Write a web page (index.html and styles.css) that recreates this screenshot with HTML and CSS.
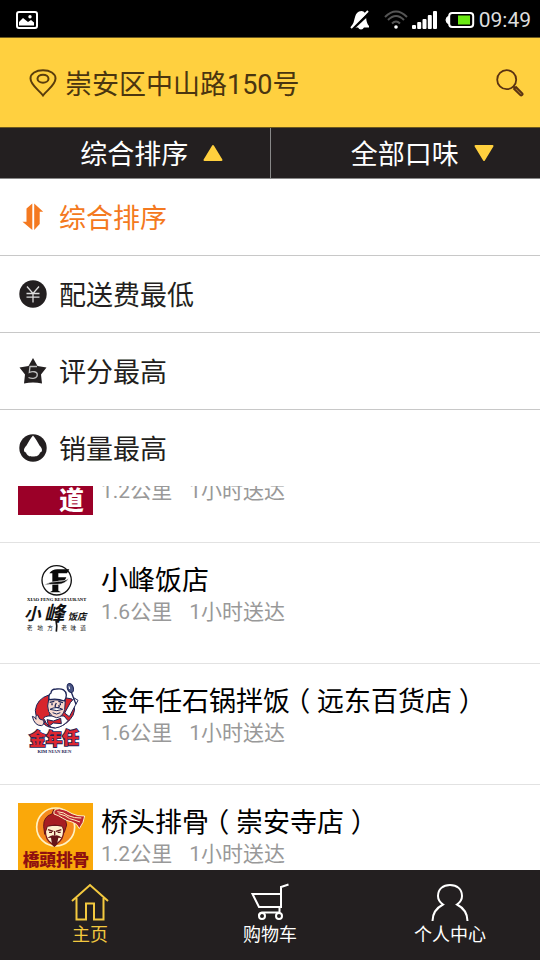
FILE: index.html
```html
<!DOCTYPE html>
<html lang="zh-CN">
<head>
<meta charset="utf-8">
<meta name="viewport" content="width=device-width, initial-scale=1">
<title>综合排序</title>
<link rel="stylesheet" href="styles.css">
</head>
<body>
<div class="app">
  <div class="status">
    <svg class="status-picture" width="22" height="18" viewBox="0 0 22 18" aria-hidden="true">
      <rect x="1" y="1" width="20" height="16" rx="2" fill="none" stroke="#fff" stroke-width="2"/>
      <path d="M3 14.500V11l4-4 5 4 3-2 3 2.500v3z" fill="#fff"/><circle cx="14" cy="5.700" r="1.700" fill="#fff"/>
    </svg>
    <div class="status-right">
      <svg width="20" height="20" viewBox="0 0 20 20" aria-hidden="true">
        <path d="M9 1.500q4-1.500 6 1.500c2 3 0 8 4 13v1.500h-5q-1 2-3 2t-3-2H1.500V16c4-4 2-12 7.500-14.500z" fill="#fff"/>
        <path d="M1.500 19.500L20 2.500" stroke="#000" stroke-width="3"/><path d="M1 18L18 1" stroke="#fff" stroke-width="2"/>
      </svg>
      <svg class="status-wifi" width="24" height="20" viewBox="0 0 24 20" fill="none" stroke="#555" stroke-width="2" aria-hidden="true">
        <path d="M1 7q11-11 22 0M4 10q8-8 16 0M8 13.500q4-4 8 0"/><circle cx="12" cy="17" r="1.800" fill="#fff" stroke="none"/>
      </svg>
      <svg width="25" height="18" viewBox="0 0 25 18" fill="#fff" aria-hidden="true">
        <rect x="0" y="14" width="4" height="4" rx="1"/><rect x="5.200" y="11" width="4" height="7" rx="1"/><rect x="10.500" y="8" width="4" height="10" rx="1"/><rect x="15.800" y="4" width="4" height="14" rx="1"/><rect x="21" y="0" width="4" height="18" rx="1"/>
      </svg>
      <svg class="status-battery" width="30" height="18" viewBox="0 0 30 18" aria-hidden="true">
        <path d="M4 5Q1 6 1 9t3 4z" fill="#fff" stroke="#fff"/><rect x="4.200" y="2" width="24" height="14" rx="3" fill="none" stroke="#fff" stroke-width="2"/><rect x="13" y="4.500" width="12" height="9" fill="#6bea14"/>
      </svg>
      <span class="status-time">09:49</span>
    </div>
  </div>

  <header class="header">
    <svg width="28" height="28" viewBox="0 0 28 28" fill="none" stroke="#5a3d0c" stroke-width="2" aria-hidden="true">
      <path d="M14 26.500C10 21 1.500 16 1.500 9.500 1.500 4.500 7 1.300 14 1.300s12.500 3.200 12.500 8.200C26.500 16 18 21 14 26.500z"/><ellipse cx="14" cy="9.700" rx="5.500" ry="4"/>
    </svg>
    <h1 class="address label">崇安区中山路150号</h1>
    <button class="search" type="button" aria-label="搜索">
      <svg width="28" height="28" viewBox="0 0 28 28" fill="none" stroke="#5a3212" stroke-width="1.800" aria-hidden="true">
        <circle cx="10.700" cy="10.700" r="9.500"/><path d="M17.500 17.500l2 2"/><path d="M20 18l6.300 6.300q.8 1-.2 1.800t-1.800 0L18 20z" fill="#a5792a"/>
      </svg>
    </button>
  </header>

  <div class="tabs">
    <button class="tab" type="button"><span class="label">综合排序</span><svg width="20" height="18" viewBox="0 0 20 18" aria-hidden="true"><path d="M10 2l8.500 14H1.500z" fill="#ffd03e" stroke="#ffd03e" stroke-width="2" stroke-linejoin="round"/></svg></button>
    <button class="tab" type="button"><span class="label">全部口味</span><svg width="20" height="18" viewBox="0 0 20 18" aria-hidden="true"><path d="M10 16L1.500 2h17z" fill="#ffd03e" stroke="#ffd03e" stroke-width="2" stroke-linejoin="round"/></svg></button>
  </div>

  <div class="sort">
    <button class="option option-active" type="button">
      <svg width="28" height="28" viewBox="0 0 28 28" fill="#f47920" aria-hidden="true">
        <path d="M13.300.500v26.500L3.500 18.700H7.500V5.500zM15.200.500L24.200 8.700H20.700V21l-5.500 6z"/>
      </svg><span class="label">综合排序</span></button>
    <button class="option" type="button">
      <svg width="28" height="28" viewBox="0 0 28 28" aria-hidden="true">
        <circle cx="14" cy="14" r="13.700" fill="#231f20"/><path d="M8 6.500l6 7 6-7M14 13.500v9M7.500 13.500h13M7.500 17.200h13" fill="none" stroke="#ddd" stroke-width="1.300"/>
      </svg><span class="label">配送费最低</span></button>
    <button class="option" type="button">
      <svg width="28" height="28" viewBox="0 0 28 28" aria-hidden="true">
        <path d="M14 1l4.500 8L27.500 10.500l-5.500 7 1 9q-9-2-18 0l1-9-5.500-7L9.500 9z" fill="#231f20"/><path d="M18 9.500h-7l-.7 6c3-1.500 8-1.200 8 2.200 0 3.800-5 4.300-8.800 2.800" fill="none" stroke="#bbb" stroke-width="1.300"/>
      </svg><span class="label">评分最高</span></button>
    <button class="option" type="button">
      <svg width="28" height="28" viewBox="0 0 28 28" aria-hidden="true">
        <circle cx="14" cy="14" r="13.700" fill="#231f20"/><path d="M14 1.500c3 3 4.500 7 6.500 10 3.500 3.500 3 6.500.5 7-1 3.500-3.500 4-7 4s-6-.5-7-4c-2.500-.5-3-3.500.5-7 2-3 3.500-7 6.500-10z" fill="#fff"/>
      </svg><span class="label">销量最高</span></button>
  </div>

  <main class="results">
    <ul class="shops">
      <li class="shop shop-scrolled">
        <svg class="logo" viewBox="0 0 225 225" aria-hidden="true"><rect width="225" height="225" fill="#9b0028"/><text class="han heavy" x="124" y="208" font-size="74" fill="#fff">道</text></svg>
        <div class="info"><h2 class="name"></h2><p class="meta"><span>1.2公里</span><span>1小时送达</span></p></div>
      </li>
      <li class="shop">
        <svg class="logo" viewBox="24 18 225 225" aria-hidden="true">
          <circle cx="140" cy="76" r="44" fill="none" stroke="#111" stroke-width="4"/>
          <path d="M118 55q10-14 28-12h32l-7 12h-26v12h24l-5 10h-19v30l8 5h-34l8-5V55z" fill="#080808"/>
          <path d="M103 91q18-13 42-12 18 1 32-10-11 19-34 19-23-1-40 3z" fill="#080808" stroke="#fff" stroke-width="2"/>
          <text class="serif" x="140" y="138" text-anchor="middle" font-size="14">XIAO FENG RESTAURANT</text>
          <g fill="#111"><text class="han brush" x="42" y="196" font-size="50">小</text><text class="han brush" x="102" y="199" font-size="62">峰</text><text class="han brush" x="173" y="194" font-size="28">饭店</text></g>
          <path d="M138 196q4 16 1 34" fill="none" stroke="#111" stroke-width="5"/>
          <g class="han" fill="#111" font-size="17" text-anchor="middle"><text x="59" y="224">老</text><text x="90" y="224">地</text><text x="120" y="224">方</text><text x="162" y="224">老</text><text x="190" y="224">味</text><text x="219" y="224">道</text></g>
        </svg>
        <div class="info"><h2 class="name">小峰饭店</h2><p class="meta"><span>1.6公里</span><span>1小时送达</span></p></div>
      </li>
      <li class="shop">
        <svg class="logo" viewBox="24 21 225 225" aria-hidden="true">
          <path d="M116 60q-36 12-40 46 1 30 24 38l20-10zM164 68l22 4q18 36-6 62-18 20-46 25-26-2-34-15l14-12z" fill="#d8252c" stroke="#1c2456" stroke-width="3"/>
          <path d="M104 135q-10-8 10-12h48l12 14q-14 18-38 22-24-2-32-24z" fill="#fff" stroke="#1c2456" stroke-width="3"/>
          <path d="M116 74q-6 20 0 36 10 18 24 18 18-2 24-24l2-28z" fill="#f7d9cf" stroke="#1c2456" stroke-width="3"/>
          <path d="M117 74q-2-16 6-20 0-12 16-12 28-4 30 18 0 10-6 18-22-9-46-4z" fill="#fff" stroke="#1c2456" stroke-width="4"/>
          <path d="M119 82l14-3M145 79l14 4M126 85v6M151 85v6M139 84q-8 14 2 14t5-8" fill="none" stroke="#1c2456" stroke-width="4"/>
          <path d="M120 103q18-10 38 0-16 8-38 0zM128 113q12 8 23 0" fill="#fff" stroke="#1c2456" stroke-width="3"/>
          <path d="M164 114l17-31 12-14 11 7-8 15-18 34z" fill="#fff" stroke="#1c2456" stroke-width="3"/>
          <path d="M184 52l14 36" stroke="#1c2456" stroke-width="4"/><ellipse cx="181" cy="39" rx="9" ry="14" fill="#4b5685" stroke="#1c2456" stroke-width="3" transform="rotate(-20 181 39)"/><path d="M177 34l2 8" stroke="#fff" stroke-width="3"/>
          <path d="M67 124q9 2 11 9-2-14 5-13l6 12 12 4q3 14-7 16-21 0-27-28z" fill="#f7d9cf" stroke="#1c2456" stroke-width="3"/>
          <path d="M111 134l19 4 22-8 2 16-24-2-14 10z" fill="#d8252c" stroke="#1c2456" stroke-width="3"/>
          <g class="han heavy" fill="#dc2730" stroke="#1c2456" stroke-width="5" paint-order="stroke" font-size="50"><text x="58" y="211">金</text><text x="107" y="209">年</text><text x="157" y="208">任</text></g>
          <text class="serif" x="133" y="235" text-anchor="middle" font-size="14" fill="#1c2456">KIM NIAN REN</text>
        </svg>
        <div class="info"><h2 class="name">金年任石锅拌饭<span class="paren">（</span>远东百货店<span class="paren">）</span></h2><p class="meta"><span>1.6公里</span><span>1小时送达</span></p></div>
      </li>
      <li class="shop">
        <svg class="logo" viewBox="24 37 225 225" aria-hidden="true">
          <rect x="24" y="37" width="225" height="225" fill="#faa80a"/>
          <circle cx="137" cy="109" r="57" fill="#f58a1d" stroke="#fff3c2" stroke-width="5"/>
          <path d="M106 104q-2 36 10 47l17 15 17-15q13-12 12-47z" fill="#fff1cf" stroke="#7b1818" stroke-width="4"/>
          <path d="M101 107q-1-30 25-37l5-13 8 12q29 8 31 34l-7 22-6-18q-22-8-45 0l-8 24z" fill="#a71d22" stroke="#65151a" stroke-width="3"/>
          <path d="M132 70q-3-15 16-16 22 3 38 15 16 8 38 7-2 19-16 38-6-16-22-20-16-3-29-12-12-8-25-12z" fill="#bd2630" stroke="#fff3c2" stroke-width="3"/>
          <path d="M142 63q20 1 32 12 19 8 40 7M146 69q22 5 33 15 16 4 31 10" fill="none" stroke="#fff3c2" stroke-width="3"/>
          <path d="M114 117l16 5M154 117l-16 5M117 125h9M143 125h9M134 121v14" stroke="#65151a" stroke-width="4"/>
          <path d="M112 142q16-13 22-6 7-7 23 6l-12-1-4 20-7 7-8-7-3-20z" fill="#65151a"/>
          <text class="han heavy" x="38" y="227" font-size="50" fill="#8f1010">橋頭排骨</text>
          <path d="M76 240h54M144 240h57" stroke="#7b1010" stroke-width="3" stroke-dasharray="9 3"/>
        </svg>
        <div class="info"><h2 class="name">桥头排骨<span class="paren">（</span>崇安寺店<span class="paren">）</span></h2><p class="meta"><span>1.2公里</span><span>1小时送达</span></p></div>
      </li>
    </ul>
  </main>

  <nav class="nav">
    <a class="nav-item nav-active" href="#home">
      <svg width="38" height="38" viewBox="0 0 38 38" aria-hidden="true"><path d="M1 18L19 2l18 16M5.500 15v21.500H15v-16h8v16h9.500V15"/></svg>主页</a>
    <a class="nav-item" href="#cart">
      <svg width="38" height="38" viewBox="0 0 38 38" aria-hidden="true"><path d="M37.500 1.500L30 4v20H8L1.500 11H30M28.500 24v5.500H11q-3 .5-3 3.500"/><circle cx="11" cy="33" r="3"/><circle cx="28" cy="33" r="3"/></svg>购物车</a>
    <a class="nav-item" href="#me">
      <svg width="38" height="38" viewBox="0 0 38 38" aria-hidden="true"><path d="M1.500 38q0-11 10.500-16.500C7 18 7 14 7 13 7 6 12 2 19 2s12 4 12 11c0 1 0 5-5 8.500Q36.500 27 36.500 38"/></svg>个人中心</a>
  </nav>
</div>
</body>
</html>
```
FILE: styles.css
```css
* {
  box-sizing: border-box;
}

body,
h1,
h2,
p,
ul {
  margin: 0;
  padding: 0;
}

body,
button {
  font-family: Roboto, "Noto Sans CJK SC", sans-serif;
  font-weight: 400;
}

button {
  border: 0;
  padding: 0;
  background: none;
  cursor: pointer;
}

svg {
  flex: none;
  display: block;
}

.app {
  display: flex;
  flex-direction: column;
  height: 100vh;
  overflow: hidden;
  background: #fff;
}

.status {
  display: flex;
  align-items: center;
  justify-content: space-between;
  height: 38px;
  padding: 2px 9px 0 16px;
  background: #000;
  border-bottom: 1px solid #6b581f;
}

.status-right {
  display: flex;
  align-items: center;
}

.status-wifi {
  margin: 0 4px 0 14px;
}

.status-battery {
  margin: 0 4px 0 8px;
}

.status-time {
  font-size: 21px;
  line-height: 24px;
  color: #ddd;
}

.header {
  display: flex;
  align-items: center;
  gap: 8px;
  height: 90px;
  padding: 0 16px 0 29px;
  background: #ffd03f;
  border-bottom: 1px solid #6b581f;
}

.address {
  flex: 1;
  font-weight: 400;
  color: #4a3510;
}

.label {
  padding-top: 4px;
  font-size: 27px;
  line-height: 38px;
}

.tabs {
  display: flex;
  background: #231f20;
  border-bottom: 1px solid #888;
}

.tab {
  display: flex;
  flex: 1;
  align-items: center;
  justify-content: center;
  gap: 15px;
  height: 50px;
  padding-left: 34px;
  color: #fff;
}

.tab + .tab {
  border-left: 1px solid #888;
}

.option {
  display: flex;
  align-items: center;
  gap: 12px;
  width: 100%;
  height: 77px;
  padding-left: 19px;
  border-bottom: 1px solid #c8c8c8;
  color: #231f20;
}

.option:last-child {
  height: 76px;
  border-bottom: 0;
}

.option-active {
  color: #f47920;
}

.results {
  flex: 1;
  min-height: 0;
  overflow: hidden;
}

.shops {
  list-style: none;
}

.shop {
  display: flex;
  gap: 8px;
  padding: 18px 18px 27px;
  border-bottom: 1px solid #e2e2e2;
}

/* The first row is scrolled part way out of the list. */
.shop-scrolled {
  margin-top: -64px;
}

.logo {
  width: 75px;
  height: 75px;
}

.name {
  height: 38px;
  font-size: 27px;
  line-height: 40px;
  font-weight: 400;
  color: #000;
}

/* Half-width brackets, each centred in a full character cell. */
.paren {
  display: inline-block;
  width: 27px;
  font-family: "Noto Sans CJK SC", sans-serif;
  font-feature-settings: "halt";
  line-height: 1;
  text-align: center;
}

.meta {
  display: flex;
  gap: 17px;
  font-size: 21px;
  line-height: 26px;
  color: #999;
}

.han {
  font-family: "Noto Sans CJK SC", sans-serif;
}

.heavy {
  font-weight: 900;
}

.brush {
  font-weight: 700;
  font-style: italic;
}

.serif {
  font-family: "Liberation Serif", serif;
  font-weight: 700;
}

.nav {
  display: flex;
  height: 90px;
  padding-top: 13px;
  background: #231f20;
}

.nav-item {
  display: flex;
  flex: 1;
  flex-direction: column;
  align-items: center;
  font-size: 18px;
  line-height: 28px;
  color: #fff;
  text-decoration: none;
}

.nav-item svg {
  fill: none;
  stroke: currentColor;
  stroke-width: 2;
}

.nav-active {
  color: #f3c93f;
}
```
